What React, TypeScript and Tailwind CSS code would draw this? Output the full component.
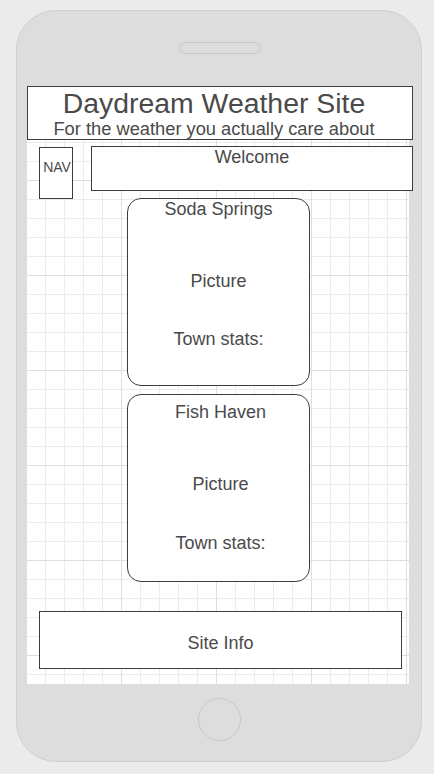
const towns = [
  { name: "Soda Springs", nameTop: "mt-[0px]", picTop: "mt-[52px]", statsTop: "mt-[38px]", shift: "pl-0" },
  { name: "Fish Haven", nameTop: "mt-[7px]", picTop: "mt-[52px]", statsTop: "mt-[39px]", shift: "pl-[4px]" },
];

const font = "font-['Liberation_Sans','Arial',sans-serif]";

export default function App() {
  return (
    <div className={`h-[774px] w-[434px] overflow-hidden bg-[#ebebeb] pl-[16px] pt-[10px] text-[#4a4a4a] ${font}`}>
      {/* phone body */}
      <div className="flex h-[752px] w-[406px] flex-col items-start rounded-[40px] border border-[#cfcfcf] bg-[#dddddd]">
        <div className="ml-[162px] mt-[31px] h-[12px] w-[82px] rounded-full border border-[#c8c8c8]" />

        {/* screen */}
        <div className="ml-[9px] mt-[32px] flex h-[598px] w-[383px] flex-col items-start bg-white bg-[image:linear-gradient(to_right,#dedede_1px,transparent_1px),linear-gradient(to_bottom,#dedede_1px,transparent_1px),linear-gradient(to_right,#ececec_1px,transparent_1px),linear-gradient(to_bottom,#ececec_1px,transparent_1px)] bg-[size:95px_95px,95px_95px,19px_19px,19px_19px] bg-[position:0_-1px]">
          <header className="ml-[1px] flex h-[54px] w-[386px] shrink-0 flex-col items-center border border-[#3c3c3c] bg-white pr-[12px]">
            <h1 className="mt-0 text-[28.4px] leading-[32px]">Daydream Weather Site</h1>
            <p className="text-[18.3px] leading-[20px]">For the weather you actually care about</p>
          </header>

          <div className="flex items-start">
            <nav className="ml-[13px] mt-[7px] flex h-[52px] w-[34px] justify-center border border-[#3c3c3c] bg-white pl-[2px] pt-[11px] text-[14px] leading-[16px]">
              NAV
            </nav>
            <div className="ml-[18px] mt-[6px] flex h-[45px] w-[322px] justify-center border border-[#3c3c3c] bg-white text-[18px] leading-[20px]">
              Welcome
            </div>
          </div>

          <div className="ml-[101px] mt-[-1px] flex flex-col gap-[8px]">
            {towns.map((t) => (
              <div
                key={t.name}
                className={`flex h-[188px] w-[183px] flex-col items-center rounded-[14px] border border-[#3c3c3c] bg-white text-[18px] leading-[20px] ${t.shift}`}
              >
                <span className={t.nameTop}>{t.name}</span>
                <span className={t.picTop}>Picture</span>
                <span className={t.statsTop}>Town stats:</span>
              </div>
            ))}
          </div>

          <footer className="ml-[13px] mt-[29px] flex h-[58px] w-[363px] items-center justify-center border border-[#3c3c3c] bg-white pt-[5px] text-[18px] leading-[20px]">
            Site Info
          </footer>
        </div>

        <div className="ml-[181px] mt-[14px] h-[43px] w-[43px] rounded-full border border-[#c8c8c8]" />
      </div>
    </div>
  );
}
